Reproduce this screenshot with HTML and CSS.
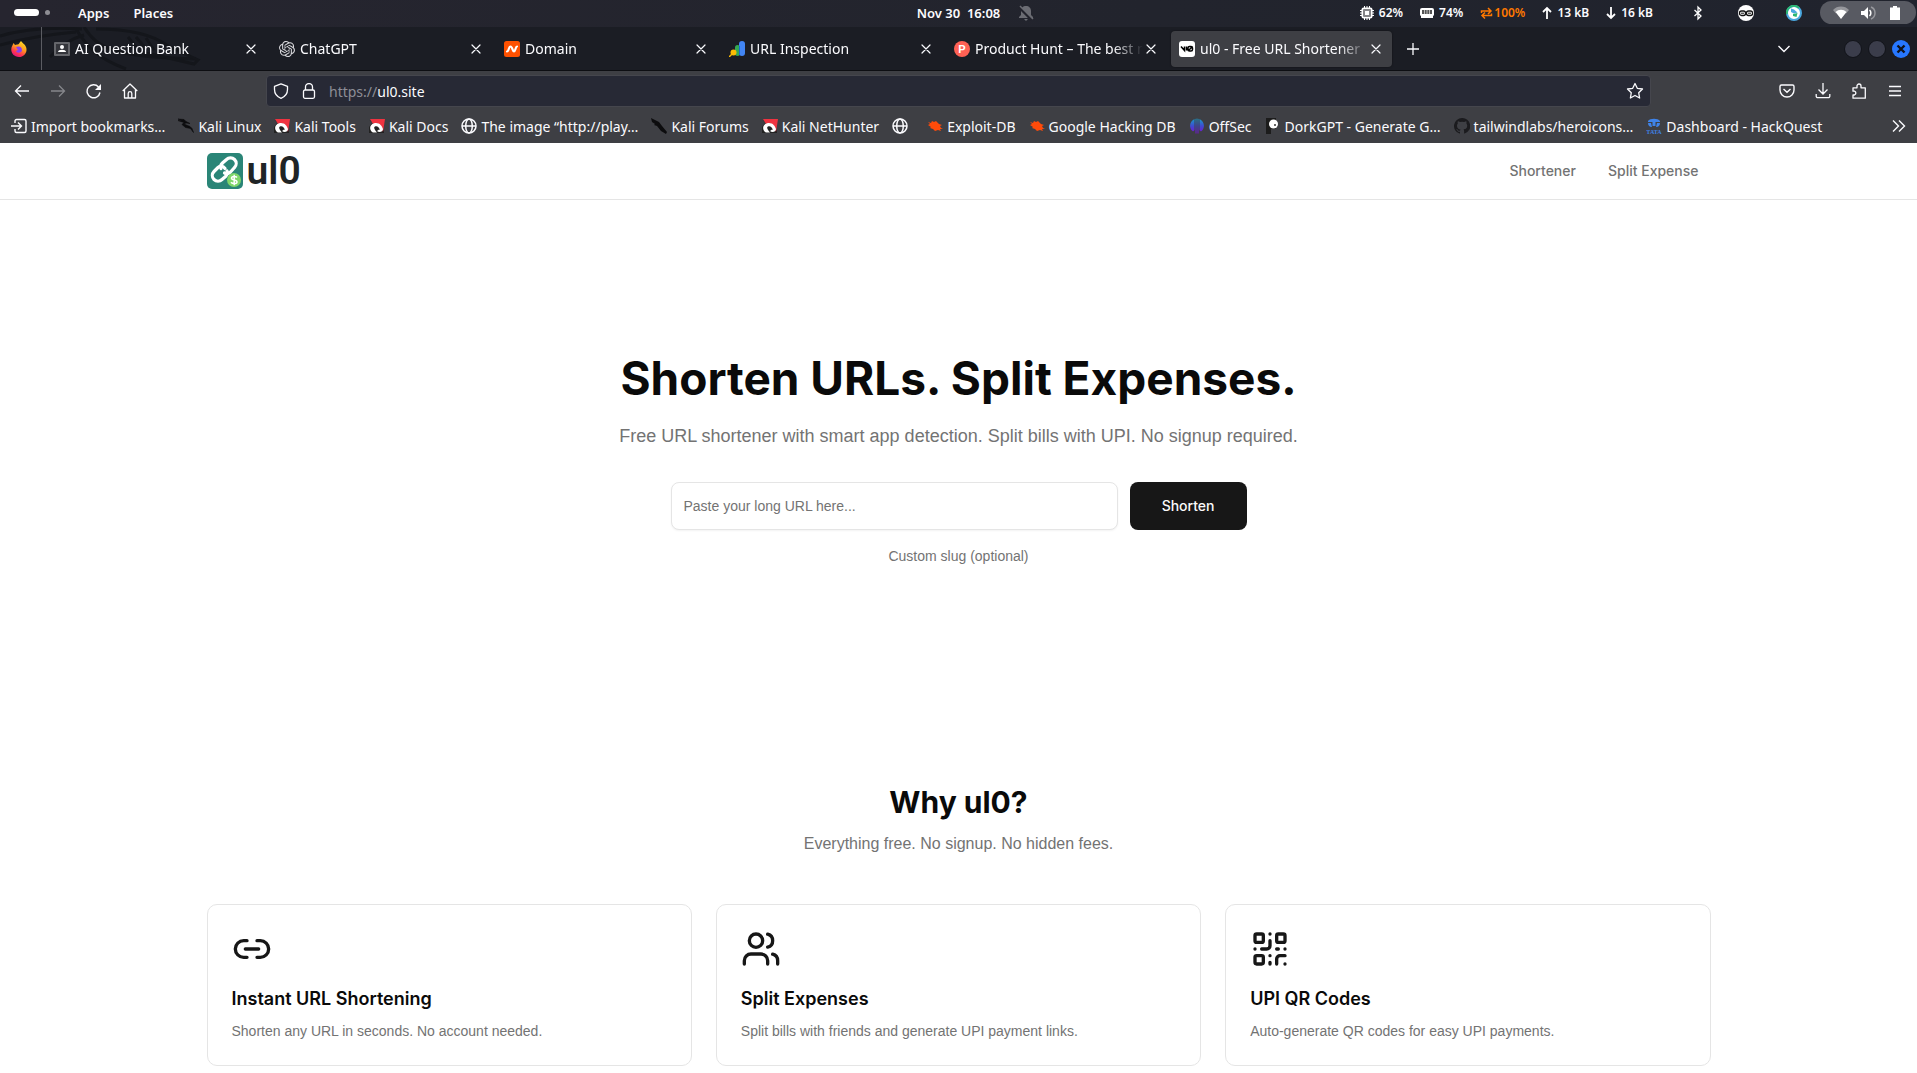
FILE: index.html
```html
<!DOCTYPE html>
<html lang="en">
<head>
<meta charset="utf-8">
<meta name="viewport" content="width=device-width, initial-scale=1">
<title>ul0 - Free URL Shortener &amp; Split Expenses</title>
<link rel="stylesheet" href="styles.css">
</head>
<body>
<svg class="defs" width="0" height="0" aria-hidden="true">
  <symbol id="close" viewBox="0 0 16 16"><path d="M4 4l8 8M12 4l-8 8" fill="none" stroke="currentColor" stroke-width="1.2" stroke-linecap="round"/></symbol>
  <symbol id="globe" viewBox="0 0 16 16"><g fill="none" stroke="currentColor" stroke-width="1.5"><circle cx="8" cy="8" r="7"/><ellipse cx="8" cy="8" rx="3.3" ry="7"/><path d="M1 8h14"/></g></symbol>
  <symbol id="kali" viewBox="0 0 16 16"><path d="M0 2l4 2-4 5v6h15v-3z" fill="#222"/><path d="M1 1h15l-2 13-2-6-4-3-4 1z" fill="#ef3340"/><path d="M3 14C-1 10 2 5 7 5c4 0 6 3 7 6 0 3-4 4-6 2l2-1.500 1 .500C10 9 8 7.500 6 8.500 4 9.500 6 12 8 14.500H4z" fill="#fff"/></symbol>
  <symbol id="bug" viewBox="0 0 16 16"><path d="M1 4l3 1 1-2 2 1 2-1 3 3 3 1-2 1 1 2 2 1h-3l1 2-3-1-3 1-2-2-3-1 1-1-3-2 2-1z" fill="#ff4b0a"/></symbol>
</svg>

<div class="desktop-panel">
  <div class="panel-left">
    <span class="workspaces"><i class="ws-active"></i><i class="ws-dot"></i></span>
    <button class="panel-btn" type="button">Apps</button>
    <button class="panel-btn" type="button">Places</button>
  </div>
  <div class="panel-clock">
    <time>Nov 30&nbsp; 16:08</time>
    <svg width="16" height="16" viewBox="0 0 16 16"><path d="M8 1c3 0 5 2 5 5v4l2 2v1H1v-1l2-2V6c0-3 2-5 5-5zM6 14h4l-2 2z" fill="#6b6c73"/><path d="M1 2l13 13" stroke="#22232c" stroke-width="3"/><path d="M2 1l13 13" stroke="#6b6c73" stroke-width="1.5"/></svg>
  </div>
  <div class="panel-right">
    <span class="stat"><svg width="14" height="14" viewBox="0 0 14 14"><path d="M4.500 0v14M7 0v14M9.500 0v14M0 4.500h14M0 7h14M0 9.500h14" stroke="#fff"/><rect x="1.500" y="1.500" width="11" height="11" rx="2" fill="#fff"/><rect x="3" y="3" width="8" height="8" rx="1" fill="#858588"/><rect x="5" y="5" width="4" height="4" fill="#fff"/></svg>62%</span>
    <span class="stat"><svg width="14" height="14" viewBox="0 0 14 14"><path d="M2 2h10a2 2 0 012 2v4a2 2 0 01-1 2v2H1v-2a2 2 0 01-1-2V4a2 2 0 012-2z" fill="#fff"/><rect x="2" y="4" width="10" height="4" fill="#555"/><path d="M4.500 4v4M7 4v4M9.500 4v4" stroke="#bbb"/></svg>74%</span>
    <span class="stat hot"><svg width="13" height="14" viewBox="0 0 13 14"><path d="M1.500 7V5H11M8 2l3 3-3 3M11.500 7.500v2H2M5 6.500l-3 3 3 3" fill="none" stroke="currentColor" stroke-width="1.500"/></svg>100%</span>
    <span class="stat"><svg width="10" height="14" viewBox="0 0 10 14"><path d="M5 13V2M1 6l4-4 4 4" fill="none" stroke="#fff" stroke-width="1.800"/></svg>13 kB</span>
    <span class="stat"><svg width="10" height="14" viewBox="0 0 10 14"><path d="M5 1v11M1 8l4 4 4-4" fill="none" stroke="#fff" stroke-width="1.800"/></svg>16 kB</span>
    <span class="tray">
      <svg width="16" height="16" viewBox="0 0 16 16"><path d="M4.500 5l6.500 6-3 3V2l3 3-6.500 6" fill="none" stroke="#fff" stroke-width="1.300"/></svg>
      <svg width="16" height="16" viewBox="0 0 16 16"><circle cx="8" cy="8" r="8" fill="#fff"/><g fill="none" stroke="#111" stroke-width="1.300"><rect x="1.500" y="6" width="6" height="4.500" rx="2"/><rect x="8.500" y="6" width="6" height="4.500" rx="2"/></g><path d="M3 8.200h3M10 8.200h3" stroke="#111"/></svg>
      <svg width="16" height="16" viewBox="0 0 16 16"><circle cx="8" cy="8" r="7" fill="#fff" stroke="#4aa8e0" stroke-width="2"/><path d="M1 9a7 7 0 0112-6" fill="none" stroke="#2bb673" stroke-width="2"/><path d="M5 3.500l3 1v4L5 7zM8 4.500l3.500 3L8 8.500z" fill="#4aa8e0"/><path d="M7 9l4.500-1-1 4-3.500-1z" fill="#2bb673"/></svg>
    </span>
    <button class="quick" type="button" aria-label="System menu">
      <svg width="16" height="16" viewBox="0 0 16 16"><path d="M0 5a11 11 0 0116 0l-3 3.500a7 7 0 00-10 0z" fill="#96979c"/><path d="M2.500 7a8 8 0 0111 0L8 14z" fill="#fff"/></svg>
      <svg width="16" height="16" viewBox="0 0 16 16"><path d="M1 6h3l4-4v12l-4-4H1z" fill="#fff"/><path d="M9.500 5a4 4 0 010 6" fill="none" stroke="#fff" stroke-width="1.500"/><path d="M11 2a6.500 6.500 0 010 12" fill="none" stroke="#96979c" stroke-width="1.500"/></svg>
      <svg width="16" height="16" viewBox="0 0 16 16"><path d="M6 1h4v1.500h3V15H3V2.500h3z" fill="#fff"/></svg>
    </button>
  </div>
</div>

<div class="tab-strip">
  <svg class="dragon" width="210" height="43" viewBox="0 0 210 43" aria-hidden="true"><g fill="none" stroke="#14161b" stroke-width="3"><path d="M0 9C20 3 50 0 82 2M84 0c14 22 30 30 112 32M76 2c12 20 24 30 50 40M0 18C30 10 50 7 76 5M50 30c12-12 20-18 34-22"/><path d="M96 2c30 0 55 4 72 17l30 14-4 4-34-8-20-4M128 10l8 10M136 10l10 12M146 11l8 12"/></g></svg>
  <button class="pinned" type="button" aria-label="Firefox View">
    <svg width="16" height="16" viewBox="0 0 16 16"><defs><linearGradient id="ff" x1=".8" y1="0" x2=".3" y2="1"><stop offset="0" stop-color="#ffe226"/><stop offset=".45" stop-color="#ff9a1f"/><stop offset=".75" stop-color="#ff3750"/><stop offset="1" stop-color="#e01084"/></linearGradient></defs><path d="M10 0c1 2 4 3 5 6 2 5-2 10-7 10S0 12 .300 8C.500 5 2 4 2.500 2l1.500 2 2-.500C8 4 8 2 10 0z" fill="url(#ff)"/><path d="M5 6c2-1 6-1 6 3 0 3-5 4-6 1l2-1z" fill="#8a3ff0"/></svg>
  </button>
  <div class="tab"><svg width="16" height="16" viewBox="0 0 16 16"><rect y="1" width="16" height="14" rx="1" fill="#65666b"/><rect x="2" y="3" width="12" height="10" fill="#34353b"/><circle cx="8" cy="6" r="2" fill="#fff"/><path d="M4 11c0-3 8-3 8 0z" fill="#fff"/></svg><span class="tab-title">AI Question Bank</span><button class="x" type="button" aria-label="Close tab"><svg width="16" height="16"><use href="#close"/></svg></button></div>
  <div class="tab"><svg width="16" height="16" viewBox="0 0 24 24"><path fill="#d8d8dc" d="M22.282 9.821a5.985 5.985 0 0 0-.516-4.910 6.046 6.046 0 0 0-6.510-2.900A6.065 6.065 0 0 0 4.981 4.182a5.985 5.985 0 0 0-3.998 2.900 6.046 6.046 0 0 0 .743 7.097 5.980 5.980 0 0 0 .510 4.911 6.051 6.051 0 0 0 6.515 2.900A5.985 5.985 0 0 0 13.260 24a6.056 6.056 0 0 0 5.772-4.206 5.990 5.990 0 0 0 3.998-2.900 6.056 6.056 0 0 0-.747-7.073zM13.260 22.430a4.476 4.476 0 0 1-2.876-1.040l.141-.081 4.779-2.758a.795.795 0 0 0 .392-.681v-6.737l2.020 1.169a.071.071 0 0 1 .038.052v5.583a4.504 4.504 0 0 1-4.494 4.493zM3.600 18.304a4.471 4.471 0 0 1-.535-3.014l.142.085 4.783 2.759a.771.771 0 0 0 .780 0l5.843-3.369v2.332a.080.080 0 0 1-.033.062L9.740 19.950a4.499 4.499 0 0 1-6.140-1.646zM2.341 7.896a4.485 4.485 0 0 1 2.365-1.973V11.600a.766.766 0 0 0 .388.677l5.815 3.354-2.020 1.169a.076.076 0 0 1-.071 0l-4.830-2.787A4.504 4.504 0 0 1 2.341 7.872zm16.596 3.856l-5.833-3.388L15.119 7.200a.076.076 0 0 1 .071 0l4.830 2.791a4.494 4.494 0 0 1-.676 8.105v-5.678a.790.790 0 0 0-.407-.667zm2.010-3.023l-.141-.085-4.774-2.782a.776.776 0 0 0-.785 0L9.409 9.230V6.897a.066.066 0 0 1 .028-.061l4.830-2.787a4.499 4.499 0 0 1 6.680 4.660zM8.307 12.863l-2.020-1.164a.080.080 0 0 1-.038-.057V6.074a4.499 4.499 0 0 1 7.376-3.454l-.142.081-4.778 2.758a.795.795 0 0 0-.393.681zm1.098-2.365l2.602-1.500 2.607 1.500v2.999l-2.597 1.500-2.607-1.500z"/></svg><span class="tab-title">ChatGPT</span><button class="x" type="button" aria-label="Close tab"><svg width="16" height="16"><use href="#close"/></svg></button></div>
  <div class="tab"><svg width="16" height="16" viewBox="0 0 16 16"><rect width="16" height="16" rx="2.500" fill="#ff5100"/><path d="M3 10.500c2 0 1.500-5 3.500-5s2 5 3.500 5 1.500-5 3-5" fill="none" stroke="#fff" stroke-width="2.200" stroke-linecap="round"/></svg><span class="tab-title">Domain</span><button class="x" type="button" aria-label="Close tab"><svg width="16" height="16"><use href="#close"/></svg></button></div>
  <div class="tab"><svg width="16" height="16" viewBox="0 0 16 16"><rect x="10" y="0" width="6" height="15" rx="3" fill="#4285f4"/><rect x="6" y="4" width="5" height="11" rx="2.500" fill="#34a853"/><path d="M10.500 5v9" stroke="#1967d2"/><circle cx="4.500" cy="11.500" r="3" fill="#fbbc04"/><path d="M3 13l-3 3" stroke="#fbbc04" stroke-width="1.500"/></svg><span class="tab-title">URL Inspection</span><button class="x" type="button" aria-label="Close tab"><svg width="16" height="16"><use href="#close"/></svg></button></div>
  <div class="tab"><svg width="16" height="16" viewBox="0 0 16 16"><circle cx="8" cy="8" r="8" fill="#ff6154"/><text x="8" y="12" class="ph-p" text-anchor="middle">P</text></svg><span class="tab-title">Product Hunt – The best n</span><button class="x" type="button" aria-label="Close tab"><svg width="16" height="16"><use href="#close"/></svg></button></div>
  <div class="tab active"><svg width="16" height="16" viewBox="0 0 16 16"><rect width="16" height="16" rx="3" fill="#fff"/><path d="M2 5.500l3.500 4V5.500M9 9.500V7a1.500 1.500 0 011.500-1.500H12A1.500 1.500 0 0113.500 7v1.500A1.500 1.500 0 0112 10h-1.500A1.500 1.500 0 019 8.500M9 10l4.500-4.500M7.500 5.500v4" fill="none" stroke="#000" stroke-width="1.500"/></svg><span class="tab-title">ul0 - Free URL Shortener</span><button class="x" type="button" aria-label="Close tab"><svg width="16" height="16"><use href="#close"/></svg></button></div>
  <button class="icon-btn new-tab" type="button" aria-label="New tab"><svg width="16" height="16" viewBox="0 0 16 16"><path d="M8 2v12M2 8h12" stroke="currentColor" stroke-width="1.300"/></svg></button>
  <button class="icon-btn list-tabs" type="button" aria-label="List all tabs"><svg width="16" height="16" viewBox="0 0 16 16"><path d="M2.500 5L8 10.500 13.500 5" fill="none" stroke="currentColor" stroke-width="1.400"/></svg></button>
  <div class="window-buttons">
    <button type="button" aria-label="Minimize"></button>
    <button type="button" aria-label="Maximize"></button>
    <button type="button" class="win-close" aria-label="Close"><svg width="18" height="18" viewBox="0 0 18 18"><path d="M5.500 5.500l7 7M12.500 5.500l-7 7" stroke="#10131c" stroke-width="2.400"/></svg></button>
  </div>
</div>

<div class="toolbar">
  <div class="toolbar-group">
    <button class="icon-btn" type="button" aria-label="Back"><svg width="16" height="16" viewBox="0 0 16 16"><path d="M15 8H2M7 2.500L1.500 8 7 13.500" fill="none" stroke="currentColor" stroke-width="1.300"/></svg></button>
    <button class="icon-btn dim" type="button" aria-label="Forward"><svg width="16" height="16" viewBox="0 0 16 16"><path d="M1 8h13M9 2.500L14.500 8 9 13.500" fill="none" stroke="currentColor" stroke-width="1.300"/></svg></button>
    <button class="icon-btn" type="button" aria-label="Reload"><svg width="16" height="16" viewBox="0 0 16 16"><path d="M14 9.500A6.500 6.500 0 1112.500 4" fill="none" stroke="currentColor" stroke-width="1.400"/><path d="M15 1v6H9z" fill="currentColor"/></svg></button>
    <button class="icon-btn" type="button" aria-label="Home"><svg width="16" height="16" viewBox="0 0 16 16"><path d="M.700 8L8 1l7.300 7M2.500 6.500V15h11V6.500M6.200 15v-4.500a1.800 1.800 0 013.600 0V15" fill="none" stroke="currentColor" stroke-width="1.300" stroke-linejoin="round"/></svg></button>
  </div>
  <div class="urlbar">
    <svg width="16" height="16" viewBox="0 0 16 16"><path d="M8 .800l6.500 2.500v3.200c0 4-2.500 7.200-6.500 8.800-4-1.600-6.500-4.800-6.500-8.800V3.300z" fill="none" stroke="currentColor" stroke-width="1.300" stroke-linejoin="round"/></svg>
    <svg width="16" height="16" viewBox="0 0 16 16"><rect x="2.500" y="7" width="11" height="8.300" rx="1.500" fill="none" stroke="currentColor" stroke-width="1.300"/><path d="M4.500 7V4a3.500 3.500 0 017 0v3" fill="none" stroke="currentColor" stroke-width="1.300"/></svg>
    <a class="url" href="https://ul0.site"><span class="scheme">https://</span>ul0.site</a>
    <svg class="star" width="18" height="18" viewBox="0 0 18 18"><path d="M9 1.500l2.300 4.800 5.200.700-3.800 3.700.900 5.300L9 13.500 4.400 16l.900-5.300L1.500 7l5.200-.700z" fill="none" stroke="currentColor" stroke-width="1.300" stroke-linejoin="round"/></svg>
  </div>
  <div class="toolbar-group">
    <button class="icon-btn" type="button" aria-label="Pocket"><svg width="16" height="16" viewBox="0 0 16 16"><path d="M2.500 2h11A1.500 1.500 0 0115 3.500V7A7 7 0 011 7V3.500A1.500 1.500 0 012.500 2zM4.500 6L8 9.200 11.500 6" fill="none" stroke="currentColor" stroke-width="1.400"/></svg></button>
    <button class="icon-btn" type="button" aria-label="Downloads"><svg width="16" height="16" viewBox="0 0 16 16"><path d="M8 0v11M3.500 6.500L8 11l4.500-4.500M1.200 11v2.200a1.500 1.500 0 001.500 1.500h10.600a1.500 1.500 0 001.500-1.500V11" fill="none" stroke="currentColor" stroke-width="1.300"/></svg></button>
    <button class="icon-btn" type="button" aria-label="Extensions"><svg width="16" height="16" viewBox="0 0 16 16"><path d="M2 15.200V12h1.500a2 2 0 000-3.800H2V4.800h4V3a2 2 0 014 0v1.800h4.300v10.400z" fill="none" stroke="currentColor" stroke-width="1.300" stroke-linejoin="round"/></svg></button>
    <button class="icon-btn" type="button" aria-label="Menu"><svg width="16" height="16" viewBox="0 0 16 16"><path d="M2 3.500h12M2 8h12M2 12.500h12" stroke="currentColor" stroke-width="1.300"/></svg></button>
  </div>
</div>

<nav class="bookmarks" aria-label="Bookmarks">
  <a href="#"><svg width="16" height="16" viewBox="0 0 16 16"><path d="M4 5V3a1.500 1.500 0 011.500-1.500h8A1.500 1.500 0 0115 3v10a1.500 1.500 0 01-1.500 1.500h-8A1.500 1.500 0 014 13v-2M0 8h10M7 4.500L10.500 8 7 11.500" fill="none" stroke="currentColor" stroke-width="1.400"/></svg>Import bookmarks…</a>
  <a href="#"><svg width="16" height="16" viewBox="0 0 16 16"><path d="M0 1l6 .500 2 2 4 2-4-.500L6 6l6 2.500 2 2 1.500 4-3-4-5-1L4 6.500l2-2-6-2 4 .500z" fill="#0c0c0e" stroke="#0c0c0e" stroke-width=".6"/></svg>Kali Linux</a>
  <a href="#"><svg width="16" height="16"><use href="#kali"/></svg>Kali Tools</a>
  <a href="#"><svg width="16" height="16"><use href="#kali"/></svg>Kali Docs</a>
  <a href="#"><svg width="16" height="16"><use href="#globe"/></svg>The image “http://play…</a>
  <a href="#"><svg width="16" height="16" viewBox="0 0 16 16"><path d="M0 0l8 4 3 4 5 6-1 2-5-3-4-5-3-1 1-1-3-2z" fill="#0c0c0e"/></svg>Kali Forums</a>
  <a href="#"><svg width="16" height="16"><use href="#kali"/></svg>Kali NetHunter</a>
  <a class="icon-only" href="#" aria-label="Website"><svg width="16" height="16"><use href="#globe"/></svg></a>
  <a href="#"><svg width="16" height="16"><use href="#bug"/></svg>Exploit-DB</a>
  <a href="#"><svg width="16" height="16"><use href="#bug"/></svg>Google Hacking DB</a>
  <a href="#"><svg width="16" height="16" viewBox="0 0 16 16"><defs><linearGradient id="os" gradientUnits="userSpaceOnUse" x1="0" y1="0" x2="0" y2="16"><stop offset="0" stop-color="#12a5c9"/><stop offset=".5" stop-color="#3f4bd0"/><stop offset="1" stop-color="#7c0bd0"/></linearGradient></defs><path d="M7.500 .500v15h-1V1zM9.500 1v14.500h-1V.500zM5.500 1v11c-1 2-2 1.500-3 0-3-4-1-9 3-11zM10.500 1v11c1 2 2 1.500 3 0 3-4 1-9-3-11z" fill="url(#os)"/></svg>OffSec</a>
  <a href="#"><svg width="16" height="16" viewBox="0 0 16 16"><path d="M1 0h10v11H6v5H1z" fill="#1c1c1c"/><circle cx="8.500" cy="6" r="4.500" fill="#fff"/><circle cx="10" cy="7" r="1" fill="#333"/></svg>DorkGPT - Generate G…</a>
  <a href="#"><svg width="16" height="16" viewBox="0 0 16 16"><path d="M8 0a8 8 0 00-2.500 15.600c.400.100.500-.200.500-.400v-1.500c-2 .400-2.600-1-2.600-1-.400-.900-.900-1.100-.900-1.100-.700-.500.100-.500.100-.500.800.100 1.200.800 1.200.800.700 1.300 1.900.900 2.300.700.100-.500.300-.900.500-1.100-1.800-.200-3.600-.900-3.600-4 0-.900.300-1.600.800-2.100-.100-.200-.400-1 .100-2.100 0 0 .700-.200 2.200.800a7.500 7.500 0 014 0c1.500-1 2.200-.800 2.200-.800.400 1.100.200 1.900.100 2.100.500.600.800 1.300.800 2.100 0 3.100-1.900 3.700-3.700 4 .300.200.600.700.600 1.500v2.200c0 .200.100.500.600.400A8 8 0 008 0z" fill="#1b1b1e"/></svg>tailwindlabs/heroicons…</a>
  <a href="#"><svg width="16" height="16" viewBox="0 0 16 16"><path d="M2 3c2-3 10-3 12 0v1H9.500v4h-3V4H2zM2 5h3l1 4C3 9 2 7 2 5zM14 5h-3l-1 4c3 0 4-2 4-4z" fill="#3f83e8"/><text x="8" y="16" class="tata" text-anchor="middle">TATA</text></svg>Dashboard - HackQuest</a>
  <button class="icon-btn more" type="button" aria-label="More bookmarks"><svg width="16" height="16" viewBox="0 0 16 16"><path d="M2 2.500L7.500 8 2 13.500M8 2.500L13.500 8 8 13.500" fill="none" stroke="currentColor" stroke-width="1.400"/></svg></button>
</nav>

<div class="site">
  <header class="site-header">
    <div class="container header-row">
      <a class="logo" href="#"><svg width="36" height="36" viewBox="0 0 36 36"><rect width="36" height="36" rx="5" fill="#2a8577"/><g fill="none" stroke="#fff" stroke-width="3.200" stroke-linecap="round"><path d="M14 15.500c-1-2 0-4 1.500-5.500l4-3.500a5.500 5.500 0 018 8l-4 4.500c-2 2-4 2-6 1"/><path d="M20 18c1 2 0 4-1.500 5.500L15 26.500a5.500 5.500 0 01-8-8l4-4c2-2 5-2 7 1"/></g><circle cx="27" cy="27" r="7" fill="#7fd66a"/><path d="M30 24.500c-1-1.500-5.500-1.500-5.500.700 0 2.400 5.500 1.300 5.500 3.800 0 2.200-4.800 2-6 .300M27.200 21.800v10.500" fill="none" stroke="#fff" stroke-width="1.500"/></svg><span>ul0</span></a>
      <nav class="site-nav"><a href="#">Shortener</a><a href="#">Split Expense</a></nav>
    </div>
  </header>
  <main>
    <section class="hero">
      <h1>Shorten URLs. Split Expenses.</h1>
      <p class="lead">Free URL shortener with smart app detection. Split bills with UPI. No signup required.</p>
      <form class="shorten">
        <input type="url" aria-label="Long URL" placeholder="Paste your long URL here...">
        <button type="button">Shorten</button>
      </form>
      <button class="slug" type="button">Custom slug (optional)</button>
    </section>
    <section class="why container">
      <h2>Why ul0?</h2>
      <p class="why-sub">Everything free. No signup. No hidden fees.</p>
      <div class="cards">
        <article class="card">
          <svg class="feature" viewBox="0 0 24 24"><path d="M9 17H7A5 5 0 0 1 7 7h2M15 7h2a5 5 0 1 1 0 10h-2M8 12h8"/></svg>
          <h3>Instant URL Shortening</h3>
          <p>Shorten any URL in seconds. No account needed.</p>
        </article>
        <article class="card">
          <svg class="feature" viewBox="0 0 24 24"><path d="M16 21v-2a4 4 0 0 0-4-4H6a4 4 0 0 0-4 4v2M16 3.128a4 4 0 0 1 0 7.744M22 21v-2a4 4 0 0 0-3-3.870"/><circle cx="9" cy="7" r="4"/></svg>
          <h3>Split Expenses</h3>
          <p>Split bills with friends and generate UPI payment links.</p>
        </article>
        <article class="card">
          <svg class="feature" viewBox="0 0 24 24"><rect width="5" height="5" x="3" y="3" rx="1"/><rect width="5" height="5" x="16" y="3" rx="1"/><rect width="5" height="5" x="3" y="16" rx="1"/><path d="M21 16h-3a2 2 0 0 0-2 2v3M21 21v.010M12 7v3a2 2 0 0 1-2 2H7M3 12h.010M12 3h.010M12 16v.010M16 12h1M21 12v.010M12 21v-1"/></svg>
          <h3>UPI QR Codes</h3>
          <p>Auto-generate QR codes for easy UPI payments.</p>
        </article>
      </div>
    </section>
  </main>
</div>
</body>
</html>
```
FILE: styles.css
```css
* { box-sizing: border-box; }

body {
  margin: 0;
  background: #fff;
  color: #0a0a0a;
  font-family: "Liberation Sans", Arial, sans-serif;
  overflow-x: hidden;
}

h1, h2, h3, p { margin: 0; }
h1, h2, h3 { font-family: Inter, sans-serif; }
a { color: inherit; text-decoration: none; }
button { margin: 0; padding: 0; border: 0; background: none; color: inherit; font: inherit; cursor: pointer; }
svg { display: block; flex: none; }
.defs { position: absolute; }

/* Desktop panel */
.desktop-panel, .tab-strip, .toolbar, .bookmarks {
  font-family: "Noto Sans", sans-serif;
  color: #fbfbfe;
  white-space: nowrap;
}

.desktop-panel {
  display: grid;
  grid-template-columns: 1fr auto 1fr;
  align-items: center;
  height: 27px;
  padding-bottom: 2px;
  background: linear-gradient(90deg, #26252f, #22242d 60%, #20232d);
  font-size: 13px;
  font-weight: 600;
}

.panel-left { display: flex; align-items: center; gap: 24px; padding-left: 14px; }
.workspaces { display: flex; align-items: center; gap: 6px; margin-right: 4px; }
.ws-active { width: 25px; height: 7px; border-radius: 4px; background: #fff; }
.ws-dot { width: 5px; height: 5px; border-radius: 50%; background: #8e8e94; }
.panel-clock { display: flex; align-items: center; gap: 18px; padding-left: 34px; }
.panel-right { display: flex; align-items: center; justify-content: flex-end; }
.stat { display: flex; align-items: center; gap: 5px; margin-right: 17px; font-size: 12px; }
.hot { gap: 1px; color: #ff7800; }
.tray { display: flex; gap: 32px; margin: 0 18px 0 20px; }
.quick {
  display: flex;
  align-items: center;
  gap: 11px;
  height: 23px;
  padding: 0 13px;
  margin-right: 1px;
  border-radius: 12px;
  background: #585a62;
}

/* Tabs */
.tab-strip {
  position: relative;
  display: flex;
  align-items: center;
  height: 44px;
  background: #1b1d24;
  border-bottom: 1px solid #0d0e12;
  font-size: 14px;
}
.dragon { position: absolute; left: 0; top: 0; }
.pinned {
  position: relative;
  display: grid;
  place-items: center;
  flex: none;
  width: 42px;
  height: 100%;
  padding-right: 3px;
  margin-right: 4px;
  border-right: 1px solid #5b5c62;
}
.tab {
  position: relative;
  display: flex;
  align-items: center;
  flex: 0 1 221px;
  min-width: 0;
  height: 36px;
  margin-right: 4px;
  padding: 0 8px;
  border-radius: 4px;
}
.active { background: #3e3f44; box-shadow: 0 0 2px #0008; }
.tab-title {
  flex: 1;
  margin-left: 5px;
  overflow: hidden;
  -webkit-mask-image: linear-gradient(90deg, #000 calc(100% - 30px), transparent);
  mask-image: linear-gradient(90deg, #000 calc(100% - 30px), transparent);
}
.icon-btn { display: grid; place-items: center; flex: none; width: 36px; height: 32px; }
.new-tab { width: 34px; }
.list-tabs { margin-left: auto; }
.window-buttons { display: flex; gap: 6px; margin: 0 7px 0 42px; }
.window-buttons button { width: 18px; height: 18px; border: 1px solid #111319; border-radius: 50%; background: #3b3d4b; }
.window-buttons .win-close { border: 0; background: #2777ff; }

/* Toolbar */
.toolbar {
  display: flex;
  align-items: center;
  gap: 118px;
  height: 40px;
  padding: 0 4px;
  background: #3e3f44;
}
.toolbar-group { display: flex; }
.dim { color: #85868b; }
.urlbar {
  display: flex;
  align-items: center;
  flex: 1;
  gap: 12px;
  height: 32px;
  padding: 0 6px;
  border: 1px solid #45464d;
  border-radius: 4px;
  background: #272935;
  font-size: 14px;
}
.url { flex: 1; }
.scheme { color: #8d8e96; }

/* Bookmarks */
.bookmarks {
  display: flex;
  align-items: center;
  gap: 13px;
  height: 32px;
  padding: 0 0 2px 11px;
  background: #3e3f44;
  font-size: 14px;
}
.bookmarks a { display: flex; align-items: center; gap: 4px; }
.icon-only { margin-right: 6px; }
.more { margin-left: auto; }
.ph-p { fill: #fff; font: 700 11px "Liberation Sans", sans-serif; }
.tata { fill: #3f83e8; font: 700 6px "Liberation Serif", serif; }

/* Site */
.container { width: 100%; max-width: 1536px; margin: 0 auto; padding: 0 16px; }
.site-header { border-bottom: 1px solid #e5e5e5; }
.header-row { display: flex; align-items: center; justify-content: space-between; height: 56px; }
.logo {
  display: flex;
  align-items: center;
  gap: 4px;
  color: #202426;
  font: 600 39px/40px Roboto, sans-serif;
}
.site-nav { display: flex; gap: 32px; padding-right: 12px; color: #737373; font: 500 14px/20px Inter, sans-serif; }

.hero {
  display: flex;
  flex-direction: column;
  align-items: center;
  justify-content: center;
  min-height: 520px;
  padding: 64px 16px;
  text-align: center;
}
.hero h1 { font-size: 46px; line-height: 48px; font-weight: 700; }
.lead { margin-top: 20px; color: #737373; font-size: 18px; line-height: 28px; }
.shorten { display: flex; gap: 12px; width: 100%; max-width: 576px; margin-top: 32px; }
.shorten input {
  flex: 1;
  min-width: 0;
  height: 48px;
  padding: 0 12px;
  border: 1px solid #e5e5e5;
  border-radius: 8px;
  background: #fff;
  box-shadow: 0 1px 2px #0000000d;
  font: 14px "Liberation Sans", Arial, sans-serif;
}
.shorten input::placeholder { color: #737373; opacity: 1; }
.shorten button {
  height: 48px;
  padding: 0 32px;
  border-radius: 8px;
  background: #171717;
  color: #fafafa;
  font: 500 14px/20px Inter, sans-serif;
}
.slug { margin-top: 16px; color: #737373; font-size: 14px; line-height: 20px; }

.why { text-align: center; }
.why h2 { margin-top: 64px; font-size: 30px; line-height: 36px; font-weight: 700; }
.why-sub { margin-top: 12px; color: #737373; font-size: 16px; line-height: 24px; }
.cards { display: grid; grid-template-columns: repeat(3, 1fr); gap: 24px; margin-top: 48px; text-align: left; }
.card { padding: 24px; border: 1px solid #e5e5e5; border-radius: 10px; }
.feature { width: 40px; height: 40px; fill: none; stroke: #171717; stroke-width: 2; stroke-linecap: round; stroke-linejoin: round; }
.card h3 { margin-top: 16px; font-size: 18px; line-height: 28px; font-weight: 600; }
.card p { margin-top: 8px; color: #737373; font-size: 14px; line-height: 20px; }
```
